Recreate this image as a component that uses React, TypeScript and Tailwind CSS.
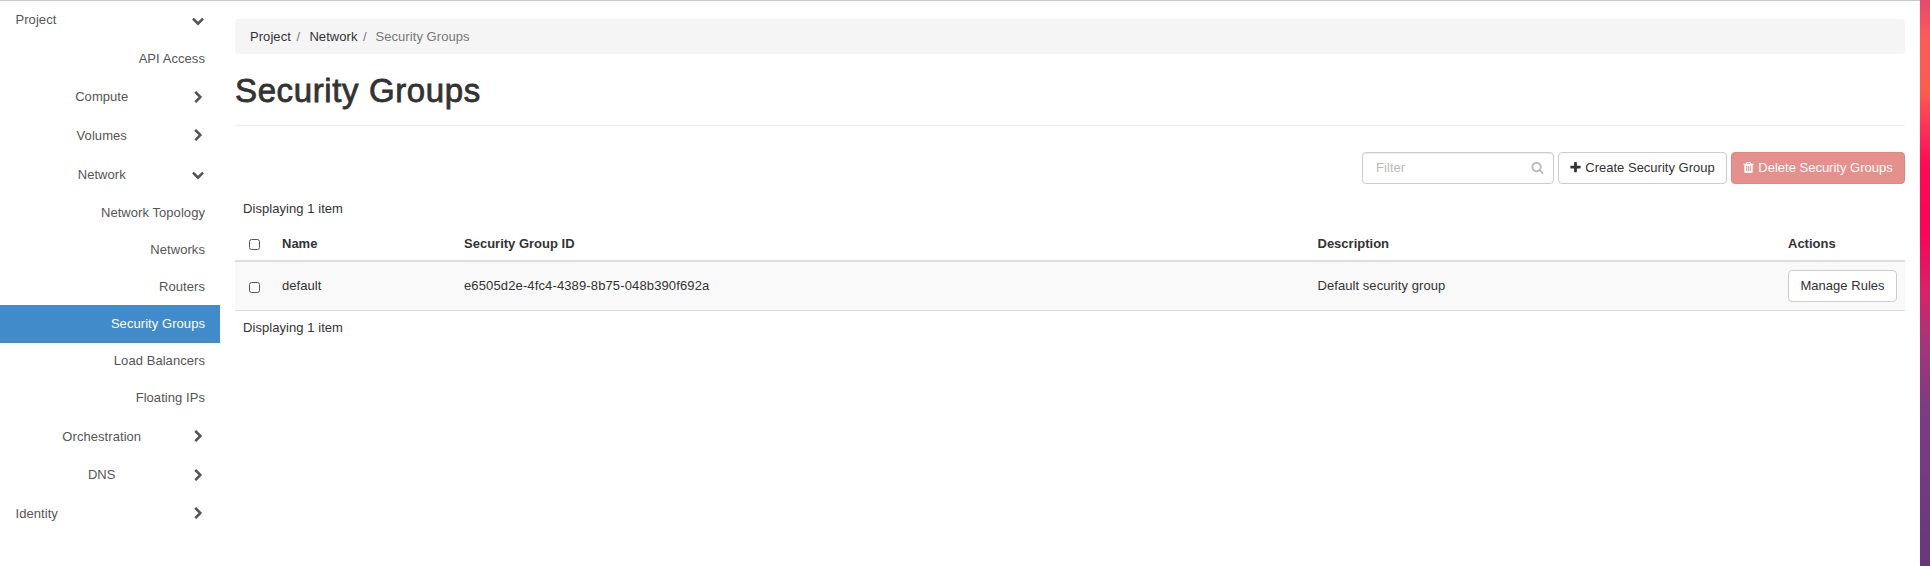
import React from "react";

const ICONS = {
  down: "M1683 808l-742 741q-19 19-45 19t-45-19l-742-741q-19-19-19-45.5t19-45.5l166-165q19-19 45-19t45 19l531 531 531-531q19-19 45-19t45 19l166 165q19 19 19 45.5t-19 45.5z",
  right: "M1363 877l-742 742q-19 19-45 19t-45-19l-166-166q-19-19-19-45t19-45l531-531-531-531q-19-19-19-45t19-45l166-166q19-19 45-19t45 19l742 742q19 19 19 45t-19 45z",
  plus: "M1600 736v192q0 40-28 68t-68 28h-416v416q0 40-28 68t-68 28h-192q-40 0-68-28t-28-68v-416h-416q-40 0-68-28t-28-68v-192q0-40 28-68t68-28h416v-416q0-40 28-68t68-28h192q40 0 68 28t28 68v416h416q40 0 68 28t28 68z",
  search: "M1216 832q0-185-131.5-316.5t-316.5-131.5-316.5 131.5-131.5 316.5 131.5 316.5 316.5 131.5 316.5-131.5 131.5-316.5zm512 832q0 52-38 90t-90 38q-54 0-90-38l-343-342q-179 124-399 124-143 0-273.5-55.5t-225-150-150-225-55.5-273.5 55.5-273.5 150-225 225-150 273.5-55.5 273.5 55.5 225 150 150 225 55.5 273.5q0 220-124 399l343 343q37 37 37 90z",
  trash: "M704 1376v-704q0-14-9-23t-23-9h-64q-14 0-23 9t-9 23v704q0 14 9 23t23 9h64q14 0 23-9t9-23zm256 0v-704q0-14-9-23t-23-9h-64q-14 0-23 9t-9 23v704q0 14 9 23t23 9h64q14 0 23-9t9-23zm256 0v-704q0-14-9-23t-23-9h-64q-14 0-23 9t-9 23v704q0 14 9 23t23 9h64q14 0 23-9t9-23zm-544-992h448l-48-117q-7-9-17-11h-317q-10 2-17 11zm928 32v64q0 14-9 23t-23 9h-96v948q0 83-47 143.5t-113 60.5h-832q-66 0-113-58.5t-47-141.5v-952h-96q-14 0-23-9t-9-23v-64q0-14 9-23t23-9h309l70-167q15-37 54-63t79-26h320q40 0 79 26t54 63l70 167h309q14 0 23 9t9 23z",
};

function Icon({ name, className = "" }: { name: keyof typeof ICONS; className?: string }) {
  return (
    <svg viewBox="0 0 1792 1792" className={`size-[13px] shrink-0 fill-current ${className}`} aria-hidden="true">
      <path d={ICONS[name]} />
    </svg>
  );
}

type NavItem = { label: string; kind: "root" | "group" | "leaf"; open?: boolean; active?: boolean; height: string };

const NAV: NavItem[] = [
  { label: "Project", kind: "root", open: true, height: "h-[38px]" },
  { label: "API Access", kind: "leaf", height: "h-[39px]" },
  { label: "Compute", kind: "group", height: "h-[38px]" },
  { label: "Volumes", kind: "group", height: "h-[39px]" },
  { label: "Network", kind: "group", open: true, height: "h-[39px]" },
  { label: "Network Topology", kind: "leaf", height: "h-[37px]" },
  { label: "Networks", kind: "leaf", height: "h-[37px]" },
  { label: "Routers", kind: "leaf", height: "h-[37px]" },
  { label: "Security Groups", kind: "leaf", active: true, height: "h-[38px]" },
  { label: "Load Balancers", kind: "leaf", height: "h-[37px] pb-[2px]" },
  { label: "Floating IPs", kind: "leaf", height: "h-[37px] pb-[2px]" },
  { label: "Orchestration", kind: "group", height: "h-[39px]" },
  { label: "DNS", kind: "group", height: "h-[38px]" },
  { label: "Identity", kind: "root", height: "h-[39px]" },
];

function NavRow({ item }: { item: NavItem }) {
  if (item.kind === "leaf") {
    return (
      <a className={`flex items-center justify-end pr-[15px] ${item.height} ${item.active ? "bg-[#428bca] text-white" : ""}`}>
        {item.label}
      </a>
    );
  }
  return (
    <a className={`flex items-center pl-[15.5px] pr-4 ${item.height}`}>
      <span className={`flex-1 ${item.kind === "group" ? "text-center" : ""}`}>{item.label}</span>
      <span className="flex w-[16px] justify-end">
        <Icon name={item.open ? "down" : "right"} className={item.open ? "translate-x-[0.5px]" : "translate-x-px"} />
      </span>
    </a>
  );
}

function Checkbox() {
  return <span className="block h-[11px] w-[11px] rounded-[2.5px] border border-[#555] bg-white" />;
}

const BTN = "flex h-8 items-center rounded-[4px] border whitespace-nowrap";
const COLS = "grid grid-cols-[47px_182px_853.5px_470.5px_117px] items-center";

export default function App() {
  return (
    <div className="flex h-[566px] w-[1930px] overflow-hidden bg-white font-['Liberation_Sans',Arial,sans-serif] text-[13px] leading-[18px] tracking-[0.06px] text-[#333]">
      <div className="flex w-[1920px] border-t border-[#c8c8c8]">
        <nav className="w-[220px] text-[#555]">
          {NAV.map((item) => (
            <NavRow key={item.label} item={item} />
          ))}
        </nav>
        <main className="ml-[15px] w-[1670px] pt-[18px]">
          <ol className="flex h-[35px] items-center rounded-[4px] bg-[#f5f5f5] px-[15px]">
            <li>Project</li>
            <li className="w-[18.5px] pl-[5.5px] text-[#777]">/</li>
            <li>Network</li>
            <li className="w-[18px] pl-[5.5px] text-[#777]">/</li>
            <li className="text-[#777]">Security Groups</li>
          </ol>
          <h1 className="flex h-[72px] items-center border-b border-[#eee] pt-[2px] text-[33px] leading-[36px] tracking-[0.62px] [-webkit-text-stroke:0.8px_#333]">
            Security Groups
          </h1>
          <div className="mt-[26px] flex justify-end gap-1">
            <div className={`${BTN} w-[192px] justify-between border-[#ccc] pl-[13px] pr-[9px] text-[#bbb] shadow-[inset_0_1px_1px_rgba(0,0,0,0.075)]`}>
              <span>Filter</span>
              <Icon name="search" className="-translate-y-px" />
            </div>
            <button className={`${BTN} w-[169px] justify-center gap-[3px] border-[#ccc] bg-white pr-px tracking-[0px]`}>
              <Icon name="plus" className="-translate-y-px" />
              Create Security Group
            </button>
            <button className={`${BTN} w-[174px] justify-center gap-[3px] border-[#e28480] bg-[#e6908d] pr-px text-white tracking-[0px]`}>
              <Icon name="trash" className="-translate-y-px" />
              Delete Security Groups
            </button>
          </div>
          <div className="mt-4 flex h-[18px] items-center pl-2">Displaying 1 item</div>
          <div className={`${COLS} mt-[9px] h-[35px] border-b-2 border-[#ddd] font-bold tracking-[0px]`}>
            <div className="pl-[14px] pt-px"><Checkbox /></div>
            <div>Name</div>
            <div>Security Group ID</div>
            <div>Description</div>
            <div>Actions</div>
          </div>
          <div className={`${COLS} h-[49px] border-b border-[#ddd] bg-[#f9f9f9]`}>
            <div className="pl-[14px] pt-[2px]"><Checkbox /></div>
            <div>default</div>
            <div className="tracking-[0.13px]">e6505d2e-4fc4-4389-8b75-048b390f692a</div>
            <div>Default security group</div>
            <button className={`${BTN} w-[109px] justify-center border-[#ccc] bg-white tracking-[0.03px]`}>Manage Rules</button>
          </div>
          <div className="mt-2 flex h-[18px] items-center pl-2">Displaying 1 item</div>
        </main>
      </div>
      <div className="w-[10px] bg-[linear-gradient(to_bottom,#e8476d_0px,#fc5a58_35px,#ff5c50_90px,#ff2e58_130px,#ff0a56_165px,#fb0358_230px,#d9206a_290px,#a8347a_340px,#7c3b82_410px,#733a80_490px,#673679_566px)]" />
    </div>
  );
}
